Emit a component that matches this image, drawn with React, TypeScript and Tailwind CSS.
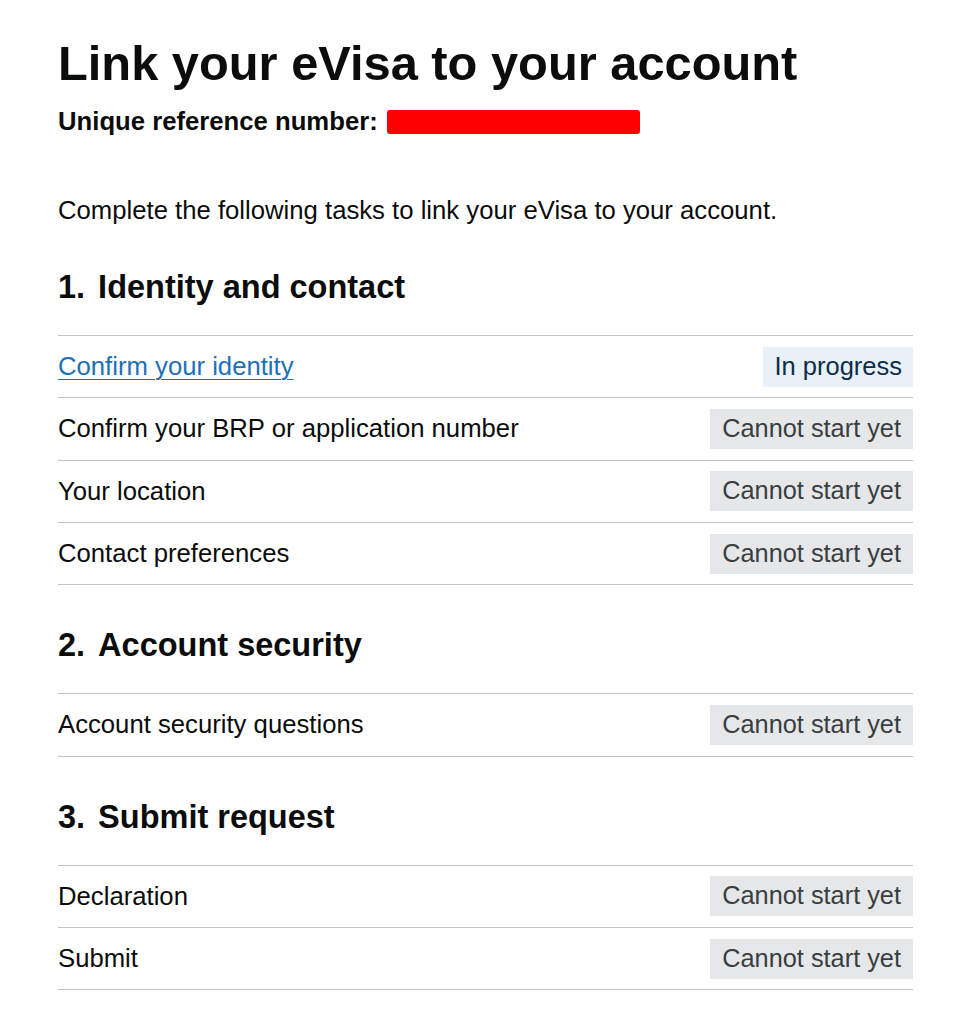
import React from "react";

type Task = { name: string; status: "progress" | "cannot"; link?: boolean };

const sections: { num: string; title: string; tasks: Task[] }[] = [
  {
    num: "1.",
    title: "Identity and contact",
    tasks: [
      { name: "Confirm your identity", status: "progress", link: true },
      { name: "Confirm your BRP or application number", status: "cannot" },
      { name: "Your location", status: "cannot" },
      { name: "Contact preferences", status: "cannot" },
    ],
  },
  {
    num: "2.",
    title: "Account security",
    tasks: [{ name: "Account security questions", status: "cannot" }],
  },
  {
    num: "3.",
    title: "Submit request",
    tasks: [
      { name: "Declaration", status: "cannot" },
      { name: "Submit", status: "cannot" },
    ],
  },
];

function Tag({ status }: { status: Task["status"] }) {
  if (status === "progress") {
    return (
      <span className="inline-block bg-[#e8f1f8] text-[#0c2d4a] px-[11px] pt-[3px] pb-[4px] text-[25.5px] leading-[33px]">
        In progress
      </span>
    );
  }
  return (
    <span className="inline-block bg-[#e6e7e8] text-[#383f43] px-[12px] pt-[3px] pb-[4px] text-[25.33px] leading-[33px]">
      Cannot start yet
    </span>
  );
}

export default function App() {
  return (
    <div
      className="bg-white min-h-[1024px] text-[#0b0c0c]"
      style={{ fontFamily: '"Liberation Sans", Arial, sans-serif' }}
    >
      <div className="pl-[58px] pt-[37px] w-[913px]">
        <h1 className="text-[48.8px] leading-[53.33px] font-bold">
          Link your eVisa to your account
        </h1>
        <p className="mt-[15px] text-[25.7px] leading-[33.33px] font-bold flex items-center">
          <span>Unique reference number:</span>
          <span className="inline-block ml-[9px] w-[253px] h-[24px] bg-[#ff0000] rounded-[3px]"></span>
        </p>
        <p className="mt-[55px] mb-[40px] text-[25.7px] leading-[33.33px]">
          Complete the following tasks to link your eVisa to your account.
        </p>
        {sections.map((s) => (
          <section key={s.title}>
            <h2 className="text-[32.5px] leading-[40px] font-bold mb-[28px] flex">
              <span>{s.num}</span>
              <span className="ml-[13px]">{s.title}</span>
            </h2>
            <ul className="mb-[40px] border-t border-[#bfc1c3]">
              {s.tasks.map((t) => (
                <li
                  key={t.name}
                  className="flex items-center justify-between border-b border-[#bfc1c3] py-[10.67px]"
                >
                  {t.link ? (
                    <a
                      href="#"
                      className="text-[25.7px] leading-[33.33px] text-[#1d70b8] underline decoration-[1px] underline-offset-[4px]"
                    >
                      {t.name}
                    </a>
                  ) : (
                    <span className="text-[25.7px] leading-[33.33px]">{t.name}</span>
                  )}
                  <Tag status={t.status} />
                </li>
              ))}
            </ul>
          </section>
        ))}
      </div>
    </div>
  );
}
